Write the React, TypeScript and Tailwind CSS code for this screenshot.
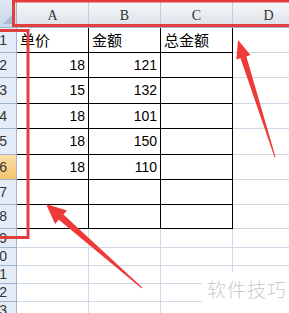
import React from 'react';

type Row = {
  n: number;
  h: string;
  a?: string;
  b?: string;
  c?: string;
  table: boolean;
  active?: boolean;
};

const rows: Row[] = [
  { n: 1, h: 'h-[25px]', a: '单价', b: '金额', c: '总金额', table: true },
  { n: 2, h: 'h-[25px]', a: '18', b: '121', table: true },
  { n: 3, h: 'h-[26px]', a: '15', b: '132', table: true },
  { n: 4, h: 'h-[25px]', a: '18', b: '101', table: true },
  { n: 5, h: 'h-[26px]', a: '18', b: '150', table: true },
  { n: 6, h: 'h-[25px]', a: '18', b: '110', table: true, active: true },
  { n: 7, h: 'h-[25px]', table: true },
  { n: 8, h: 'h-[24px]', table: true },
  { n: 9, h: 'h-[19px]', table: false },
  { n: 10, h: 'h-[18px]', table: false },
  { n: 11, h: 'h-[18px]', table: false },
  { n: 12, h: 'h-[18px]', table: false },
  { n: 13, h: 'h-[18px]', table: false },
];

const cjk = "font-['Noto_Sans_CJK_SC',sans-serif]";
const num = "font-['Liberation_Sans',Arial,sans-serif]";

const DataCell: React.FC<{ value?: string; table: boolean }> = ({ value, table }) => {
  const isNum = value !== undefined && /^\d+$/.test(value);
  return (
    <div
      className={`flex items-center shrink-0 w-[72px] h-full border-r border-b text-black ${
        table ? 'border-black' : 'border-[#d0d7e5]'
      } ${isNum ? `justify-end pr-[3px] text-[14px] ${num}` : `justify-start pl-[3px] text-[15px] ${cjk}`}`}
    >
      {value}
    </div>
  );
};

const ColHeader: React.FC<{ label: string }> = ({ label }) => (
  <div className="flex items-center justify-center shrink-0 w-[72px] h-full pt-[4px] border-r border-[#c3ceda] text-[14px] text-[#333] font-['Liberation_Serif',serif]">
    {label}
  </div>
);

export default function App() {
  return (
    <div className="relative w-[289px] h-[313px] overflow-hidden bg-white">
      {/* column headers */}
      <div className="flex h-[28px] border-b border-[#9eb6ce] bg-linear-to-b from-[#f8f9fb] to-[#dce2e9]">
        <div className="relative shrink-0 w-[17px] h-full border-r border-[#9eb6ce] bg-linear-to-b from-[#dfe8f3] to-[#c9d8ea]">
          <svg className="absolute right-[2px] bottom-[3px]" width="11" height="11" viewBox="0 0 11 11">
            <polygon points="11,0 11,11 0,11" fill="#a7bcd4" />
          </svg>
        </div>
        <ColHeader label="A" />
        <ColHeader label="B" />
        <ColHeader label="C" />
        <ColHeader label="D" />
      </div>

      {/* rows */}
      {rows.map(r => (
        <div key={r.n} className={`flex ${r.h}`}>
          <div
            className={`flex items-center justify-end shrink-0 w-[17px] h-full pr-[9px] overflow-hidden whitespace-nowrap border-r border-b border-[#9eb6ce] text-[14px] text-[#333] ${num} ${
              r.active ? 'bg-linear-to-b from-[#fbe0a8] to-[#f4c66c]' : 'bg-[#e4ecf7]'
            }`}
          >
            {r.n}
          </div>
          <DataCell value={r.a} table={r.table} />
          <DataCell value={r.b} table={r.table} />
          <DataCell value={r.c} table={r.table} />
          <DataCell table={false} />
        </div>
      ))}

      {/* watermark */}
      <div className={`absolute left-[202px] top-[272px] w-[90px] h-[41px] bg-white pl-[5px] pt-[7px] text-[19px] leading-none tracking-[1px] text-[#cdcdcd] font-light ${cjk}`}>
        软件技巧
      </div>

      {/* red annotations */}
      <svg className="absolute inset-0 pointer-events-none" width="289" height="313" viewBox="0 0 289 313">
        <rect x="13.5" y="1" width="290" height="24.5" fill="none" stroke="#e23e3e" strokeWidth="3" />
        <rect x="-5" y="30.5" width="33" height="207" fill="none" stroke="#e23e3e" strokeWidth="3" />
        <polygon points="238,40 250.5,55 246.4,56.4 275.5,157 274.5,157.3 240.5,58.2 236.4,59.5" fill="#ef3a3a" />
        <polygon points="46,204 67,210.4 63.4,214.6 142.3,287.6 141.7,288.4 58.8,219.8 55.1,224" fill="#ef3a3a" />
      </svg>
    </div>
  );
}
